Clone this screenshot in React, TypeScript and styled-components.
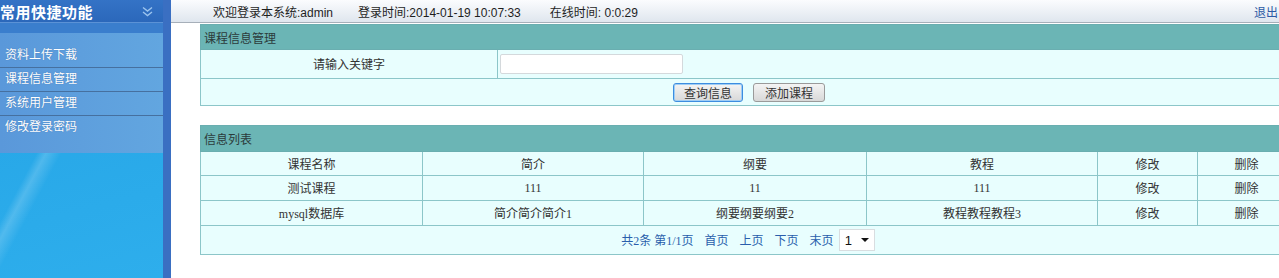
import styled, { createGlobalStyle } from 'styled-components'

const GlobalStyle = createGlobalStyle`
  html, body {
    margin: 0;
    padding: 0;
    overflow: hidden;
    background: #ffffff;
  }
  body {
    font-family: "Liberation Sans", "Noto Sans CJK SC", sans-serif;
    font-size: 12px;
    color: #222;
  }
`

const Shell = styled.div`
  display: flex;
  width: 1279px;
  height: 278px;
  overflow: hidden;
`

const Sidebar = styled.aside`
  flex: 0 0 163px;
  display: flex;
  flex-direction: column;
  border-right: 8px solid #3a6fc2;
  background:
    linear-gradient(118deg, transparent 38%, rgba(255, 255, 255, 0.18) 41%, transparent 46%),
    linear-gradient(165deg, #1b98dc 0%, #28a8e8 45%, #2eaeec 100%);
`

const SideHeader = styled.div`
  height: 22px;
  display: flex;
  align-items: center;
  justify-content: space-between;
  padding: 0 9px 0 0;
  background: linear-gradient(#3473c6, #2b68bb);
  border-bottom: 1px solid #5b92d6;
  color: #fff;
  font-family: "Noto Sans CJK SC", sans-serif;
  font-weight: bold;
  font-size: 15px;
  letter-spacing: 0.5px;
  white-space: nowrap;
`

const SideBand = styled.div`
  height: 10px;
  background: #3a7ecd;
`

const Menu = styled.ul`
  list-style: none;
  margin: 0;
  padding: 11px 0 13px;
  background: linear-gradient(90deg, #5a98da, #62a6e0);
`

const MenuItem = styled.li<{ $last?: boolean }>`
  height: 23px;
  line-height: 23px;
  padding-left: 5px;
  color: #fff;
  font-size: 12px;
  text-shadow: 0 0 1px rgba(20, 50, 100, 0.4);
  border-bottom: 1px solid ${p => (p.$last ? 'transparent' : '#46709f')};
`

const SideRest = styled.div`
  flex: 1;
`

const Main = styled.main`
  flex: 1;
  display: flex;
  flex-direction: column;
  min-width: 0;
`

const TopBar = styled.header`
  height: 22px;
  display: flex;
  align-items: center;
  padding-left: 42px;
  background: linear-gradient(#fbfcfe, #dfe6ee);
  border-bottom: 1px solid #a6afb9;
  font-size: 12px;
  color: #1e1e1e;
  white-space: nowrap;
`

const TopItem = styled.span<{ $gap?: number }>`
  margin-right: ${p => p.$gap ?? 0}px;
`

const Logout = styled.a`
  margin-left: auto;
  margin-right: 1px;
  color: #2d5aa5;
  text-decoration: none;
  font-size: 12px;
`

const Content = styled.div`
  padding: 1px 0 0 29px;
  display: flex;
  flex-direction: column;
  gap: 19px;
`

const Panel = styled.table`
  width: 1095px;
  border-collapse: collapse;
  table-layout: fixed;
  font-family: "Liberation Serif", "Noto Sans CJK SC", serif;
  font-size: 12px;
  color: #333;
`

const TitleCell = styled.th`
  background: #6bb5b5;
  border: 1px solid #6aaeb0;
  text-align: left;
  font-weight: normal;
  padding: 0 3px;
  font-family: "Noto Sans CJK SC", sans-serif;
  color: #2c3b3b;
`

const Row = styled.tr<{ $h: number }>`
  height: ${p => p.$h}px;
`

const Cell = styled.td<{ $align?: string }>`
  background: #e8fefe;
  border: 1px solid #8cc6c9;
  text-align: ${p => p.$align ?? 'center'};
  padding: 0 3px;
  white-space: nowrap;
`

const KeywordInput = styled.input`
  width: 181px;
  height: 18px;
  box-sizing: content-box;
  padding: 0;
  border: 1px solid #d4d9dc;
  border-radius: 2px;
  background: #fff;
  display: block;
  margin-left: -1px;
`

const Buttons = styled.div`
  display: flex;
  gap: 10px;
  margin-left: 469px;
`

const Button = styled.button<{ $focused?: boolean }>`
  height: 19px;
  width: ${p => (p.$focused ? 70 : 72)}px;
  padding: 0;
  font-family: "Noto Sans CJK SC", sans-serif;
  font-size: 12px;
  line-height: 15px;
  color: #333;
  background: linear-gradient(#f4f4f4, #d8d8d8);
  border: 1px solid ${p => (p.$focused ? '#3c8de0' : '#9a9a9a')};
  box-shadow: ${p => (p.$focused ? 'inset 0 0 0 1px #9fcdf5' : 'none')};
  border-radius: 3px;
  white-space: nowrap;
`

const Pager = styled.div`
  display: flex;
  align-items: center;
  justify-content: center;
  gap: 11px;
  color: #2a5eac;
  font-size: 12px;
`

const PagerSelect = styled.div`
  display: inline-flex;
  align-items: center;
  gap: 9px;
  height: 20px;
  padding: 0 5px;
  background: #fff;
  border: 1px solid #d9dde0;
  color: #111;
  font-family: "Liberation Sans", sans-serif;
  font-size: 13px;
  margin-left: -6px;
`

const Caret = styled.span`
  width: 0;
  height: 0;
  border-left: 4px solid transparent;
  border-right: 4px solid transparent;
  border-top: 4px solid #111;
`

const columns = [222, 221, 223, 231, 100, 98]

const rows = [
  ['测试课程', '111', '11', '111'],
  ['mysql数据库', '简介简介简介1', '纲要纲要纲要2', '教程教程教程3'],
]

function ChevronDouble() {
  return (
    <svg width="13" height="11" viewBox="0 0 13 11" fill="none" stroke="#9cc4ee" strokeWidth="1.4">
      <path d="M2 1.5l4.5 3.5 4.5-3.5" />
      <path d="M2 6l4.5 3.5 4.5-3.5" />
    </svg>
  )
}

export default function App() {
  return (
    <>
      <GlobalStyle />
      <Shell>
        <Sidebar>
          <SideHeader>
            <span>常用快捷功能</span>
            <ChevronDouble />
          </SideHeader>
          <SideBand />
          <Menu>
            <MenuItem>资料上传下载</MenuItem>
            <MenuItem>课程信息管理</MenuItem>
            <MenuItem>系统用户管理</MenuItem>
            <MenuItem $last>修改登录密码</MenuItem>
          </Menu>
          <SideRest />
        </Sidebar>

        <Main>
          <TopBar>
            <TopItem $gap={25}>欢迎登录本系统:admin</TopItem>
            <TopItem $gap={29}>登录时间:2014-01-19 10:07:33</TopItem>
            <TopItem>在线时间: 0:0:29</TopItem>
            <Logout href="#">退出</Logout>
          </TopBar>

          <Content>
            <Panel>
              <colgroup>
                <col style={{ width: 297 }} />
                <col />
              </colgroup>
              <tbody>
                <Row $h={25}>
                  <TitleCell colSpan={2}>课程信息管理</TitleCell>
                </Row>
                <Row $h={29}>
                  <Cell>请输入关键字</Cell>
                  <Cell $align="left">
                    <KeywordInput />
                  </Cell>
                </Row>
                <Row $h={27}>
                  <Cell colSpan={2} $align="left">
                    <Buttons>
                      <Button $focused>查询信息</Button>
                      <Button>添加课程</Button>
                    </Buttons>
                  </Cell>
                </Row>
              </tbody>
            </Panel>

            <Panel>
              <colgroup>
                {columns.map((w, i) => (
                  <col key={i} style={{ width: w }} />
                ))}
              </colgroup>
              <tbody>
                <Row $h={26}>
                  <TitleCell colSpan={6}>信息列表</TitleCell>
                </Row>
                <Row $h={24}>
                  <Cell>课程名称</Cell>
                  <Cell>简介</Cell>
                  <Cell>纲要</Cell>
                  <Cell>教程</Cell>
                  <Cell>修改</Cell>
                  <Cell>删除</Cell>
                </Row>
                {rows.map(r => (
                  <Row $h={25} key={r[0]}>
                    {r.map((v, i) => (
                      <Cell key={i}>{v}</Cell>
                    ))}
                    <Cell>修改</Cell>
                    <Cell>删除</Cell>
                  </Row>
                ))}
                <Row $h={29}>
                  <Cell colSpan={6}>
                    <Pager>
                      <span>共2条 第1/1页</span>
                      <span>首页</span>
                      <span>上页</span>
                      <span>下页</span>
                      <span>末页</span>
                      <PagerSelect>
                        1<Caret />
                      </PagerSelect>
                    </Pager>
                  </Cell>
                </Row>
              </tbody>
            </Panel>
          </Content>
        </Main>
      </Shell>
    </>
  )
}
